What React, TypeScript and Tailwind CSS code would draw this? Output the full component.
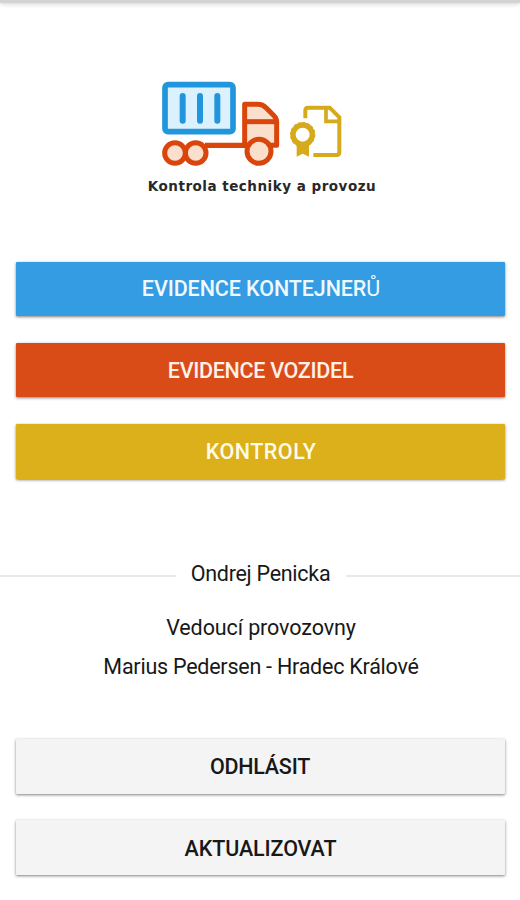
import React from "react";

function Logo() {
  return (
    <svg width="220" height="100" viewBox="0 0 660 300" fill="none" className="block">
      <rect x="75" y="44" width="204" height="141" rx="9" fill="#dcf1fe" stroke="#2196dc" strokeWidth="17" />
      <path d="M128 78V152M180 78V152M232 78V152" stroke="#2196dc" strokeWidth="18" strokeLinecap="round" />
      <path d="M195 226H320" stroke="#d9450a" strokeWidth="16" />
      <path d="M314 226V103H354Q368 103 379 114L402 137Q410 145 410 156V226Z" fill="#fbdfcd" stroke="#d9450a" strokeWidth="15" strokeLinejoin="round" />
      <path d="M314 155H408" stroke="#d9450a" strokeWidth="15" />
      <g fill="#fbdfcd" stroke="#d9450a" strokeWidth="15">
        <circle cx="167" cy="249" r="31" />
        <circle cx="105" cy="249" r="31" />
        <circle cx="357" cy="244" r="36" />
      </g>
      <path d="M496 145V121Q496 113 504 113H569L598 142V247Q598 255 590 255H520" stroke="#d5aa1c" strokeWidth="12" />
      <path d="M558 113V154H598" stroke="#d5aa1c" strokeWidth="11" />
      <path d="M470 222V260L488 251L507 260V222Z" fill="#d5aa1c" />
      <circle cx="488" cy="194" r="29" fill="#fff" stroke="#d5aa1c" strokeWidth="16" />
      <circle cx="488" cy="194" r="36" stroke="#d5aa1c" strokeWidth="4" strokeDasharray="8 6" />
    </svg>
  );
}

type ButtonProps = { color: string; children: React.ReactNode };

function Button({ color, children }: ButtonProps) {
  return (
    <button
      className={`flex w-full items-center justify-center rounded-[1px] text-[21.5px] leading-none font-medium shadow-[0_1px_3px_rgba(0,0,0,0.5)] ${color}`}
    >
      {children}
    </button>
  );
}

export default function App() {
  return (
    <main className="h-[900px] w-[520px] overflow-hidden bg-white font-[Roboto,sans-serif] text-[#181818]">
      <div className="h-[3px] bg-[#d3d3d3] shadow-[0_1px_4px_rgba(0,0,0,0.22)]" />
      <header className="h-[259px] pt-[67px]">
        <div className="ml-[140px]">
          <Logo />
        </div>
        <h1 className="mt-[7px] ml-[4px] text-center font-['DejaVu_Sans',sans-serif] text-[13.5px] leading-[18px] font-bold tracking-[0.5px] whitespace-nowrap text-[#282828]">
          Kontrola techniky a provozu
        </h1>
      </header>
      <nav className="flex flex-col pr-[15px] pl-4">
        <Button color="h-[54px] bg-[#339ce3] pl-px tracking-[-0.1px] text-[#f0f9ff]">
          <span>EVIDENCE KONTEJNER<span className="font-normal">Ů</span></span>
        </Button>
        <Button color="mt-[27px] h-[54px] bg-[#d94c17] pt-px tracking-[-0.3px] text-[#fff0e8]">EVIDENCE VOZIDEL</Button>
        <Button color="mt-[27px] h-[55px] bg-[#dbb01a] pl-px tracking-[0.5px] text-[#fffbe8]">KONTROLY</Button>
      </nav>
      <section className="mt-[80px] text-center text-[21.5px]">
        <div className="flex h-[30px] items-center">
          <span className="mt-[4px] h-[2px] w-[176px] bg-[#e9e9e9]" />
          <span className="flex-1 pr-px leading-[30px] tracking-[-0.28px] whitespace-nowrap">Ondrej Penicka</span>
          <span className="mt-[4px] h-[2px] w-[174px] bg-[#e9e9e9]" />
        </div>
        <p className="mt-[24px] pl-[2px] leading-[30px] tracking-[-0.1px]">Vedoucí provozovny</p>
        <p className="mt-[9px] pl-[2px] leading-[30px] tracking-[-0.24px]">Marius Pedersen - Hradec Králové</p>
      </section>
      <div className="mt-[57px] flex flex-col gap-[26px] pr-[15px] pl-4">
        <Button color="h-[55px] bg-[#f4f4f4] pr-px tracking-[-0.25px]">ODHLÁSIT</Button>
        <Button color="h-[55px] bg-[#f4f4f4] pt-[2px] tracking-[-0.1px]">AKTUALIZOVAT</Button>
      </div>
    </main>
  );
}
